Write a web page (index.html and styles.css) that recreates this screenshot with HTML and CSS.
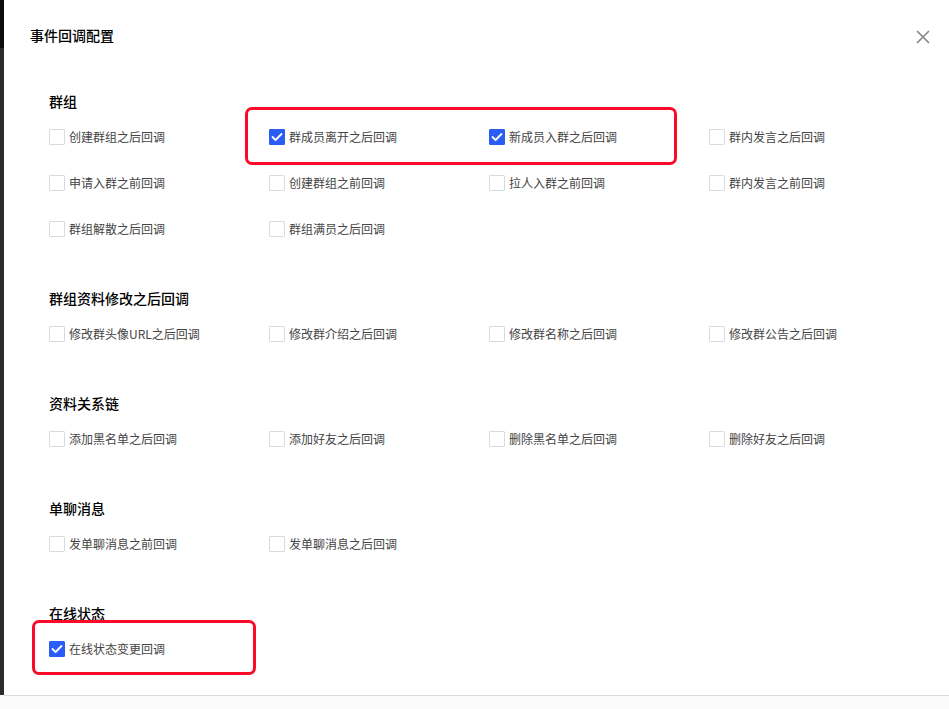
FILE: index.html
```html
<!DOCTYPE html>
<html lang="zh">
<head>
<meta charset="utf-8">
<title>事件回调配置</title>
<link rel="stylesheet" href="styles.css">
</head>
<body>
<div class="strip"></div>
<div class="dialog">
  <div class="header">
    <div class="title">事件回调配置</div>
    <button class="close" aria-label="关闭">
      <svg width="14" height="14" viewBox="0 0 14 14"><path d="M1.5 1.5 L12.5 12.5 M12.5 1.5 L1.5 12.5" stroke="#888" stroke-width="1.7" fill="none" stroke-linecap="round"/></svg>
    </button>
  </div>
  <div class="content">
    <div class="section">
      <div class="sec-title">群组</div>
      <div class="grid">
        <label class="item"><span class="box"></span><span class="lbl">创建群组之后回调</span></label>
        <label class="item"><span class="box checked"><svg width="12" height="10" viewBox="0 0 12 10"><path d="M1.5 5 L4.6 8 L10.5 2" stroke="#fff" stroke-width="1.8" fill="none" stroke-linecap="round" stroke-linejoin="round"/></svg></span><span class="lbl">群成员离开之后回调</span></label>
        <label class="item"><span class="box checked"><svg width="12" height="10" viewBox="0 0 12 10"><path d="M1.5 5 L4.6 8 L10.5 2" stroke="#fff" stroke-width="1.8" fill="none" stroke-linecap="round" stroke-linejoin="round"/></svg></span><span class="lbl">新成员入群之后回调</span></label>
        <label class="item"><span class="box"></span><span class="lbl">群内发言之后回调</span></label>
        <label class="item"><span class="box"></span><span class="lbl">申请入群之前回调</span></label>
        <label class="item"><span class="box"></span><span class="lbl">创建群组之前回调</span></label>
        <label class="item"><span class="box"></span><span class="lbl">拉人入群之前回调</span></label>
        <label class="item"><span class="box"></span><span class="lbl">群内发言之前回调</span></label>
        <label class="item"><span class="box"></span><span class="lbl">群组解散之后回调</span></label>
        <label class="item"><span class="box"></span><span class="lbl">群组满员之后回调</span></label>
      </div>
    </div>
    <div class="section">
      <div class="sec-title">群组资料修改之后回调</div>
      <div class="grid">
        <label class="item"><span class="box"></span><span class="lbl">修改群头像URL之后回调</span></label>
        <label class="item"><span class="box"></span><span class="lbl">修改群介绍之后回调</span></label>
        <label class="item"><span class="box"></span><span class="lbl">修改群名称之后回调</span></label>
        <label class="item"><span class="box"></span><span class="lbl">修改群公告之后回调</span></label>
      </div>
    </div>
    <div class="section">
      <div class="sec-title">资料关系链</div>
      <div class="grid">
        <label class="item"><span class="box"></span><span class="lbl">添加黑名单之后回调</span></label>
        <label class="item"><span class="box"></span><span class="lbl">添加好友之后回调</span></label>
        <label class="item"><span class="box"></span><span class="lbl">删除黑名单之后回调</span></label>
        <label class="item"><span class="box"></span><span class="lbl">删除好友之后回调</span></label>
      </div>
    </div>
    <div class="section">
      <div class="sec-title">单聊消息</div>
      <div class="grid">
        <label class="item"><span class="box"></span><span class="lbl">发单聊消息之前回调</span></label>
        <label class="item"><span class="box"></span><span class="lbl">发单聊消息之后回调</span></label>
      </div>
    </div>
    <div class="section">
      <div class="sec-title">在线状态</div>
      <div class="grid">
        <label class="item"><span class="box checked"><svg width="12" height="10" viewBox="0 0 12 10"><path d="M1.5 5 L4.6 8 L10.5 2" stroke="#fff" stroke-width="1.8" fill="none" stroke-linecap="round" stroke-linejoin="round"/></svg></span><span class="lbl">在线状态变更回调</span></label>
      </div>
    </div>
  </div>
  <div class="footer"></div>
</div>
<div class="mark mark-1"></div>
<div class="mark mark-2"></div>
</body>
</html>
```
FILE: styles.css
```css
html, body {
  margin: 0;
  padding: 0;
}
body {
  position: relative;
  width: 949px;
  height: 709px;
  overflow: hidden;
  display: flex;
  background: #fff;
  font-family: "Noto Sans CJK SC", "Noto Sans", sans-serif;
}
.strip {
  width: 4px;
  flex: none;
  background: linear-gradient(to bottom, #0d0d0d 0, #0d0d0d 48px, #2c2c2c 48px, #2c2c2c 695px, #fbfbfb 695px, #fbfbfb 100%);
}
.dialog {
  flex: 1;
  display: flex;
  flex-direction: column;
  background: #fff;
}
.header {
  position: relative;
  height: 70px;
  box-sizing: border-box;
  padding: 24px 0 0 26px;
}
.title {
  font-size: 14px;
  line-height: 22px;
  font-weight: 500;
  color: #000;
}
.close {
  position: absolute;
  right: 19px;
  top: 30px;
  width: 14px;
  height: 14px;
  padding: 0;
  border: 0;
  background: none;
  display: flex;
}
.content {
  flex: 1;
  overflow: hidden;
  padding: 20px 0 0 45px;
}
.section {
  margin-bottom: 47px;
}
.sec-title {
  font-size: 14px;
  line-height: 22px;
  font-weight: 500;
  color: #000;
  margin-bottom: 14px;
}
.grid {
  display: grid;
  grid-template-columns: repeat(4, 220px);
  row-gap: 24px;
}
.item {
  display: flex;
  align-items: center;
  height: 22px;
  font-size: 12px;
  color: #444;
}
.box {
  width: 16px;
  height: 16px;
  box-sizing: border-box;
  border: 1px solid #d8dbe2;
  border-radius: 1px;
  margin-right: 4px;
  display: flex;
  align-items: center;
  justify-content: center;
  flex: none;
}
.box.checked {
  background: #2a5cf6;
  border-color: #2a5cf6;
}
.lbl {
  line-height: 22px;
}
.footer {
  height: 14px;
  box-sizing: border-box;
  border-top: 1px solid #dcdcdc;
  background: #fbfbfb;
}
.mark {
  position: absolute;
  box-sizing: border-box;
  border: 3px solid #fc0a2a;
  border-radius: 7px;
}
.mark-1 {
  left: 245px;
  top: 107px;
  width: 432px;
  height: 58px;
}
.mark-2 {
  left: 32px;
  top: 620px;
  width: 224px;
  height: 55px;
}
```
